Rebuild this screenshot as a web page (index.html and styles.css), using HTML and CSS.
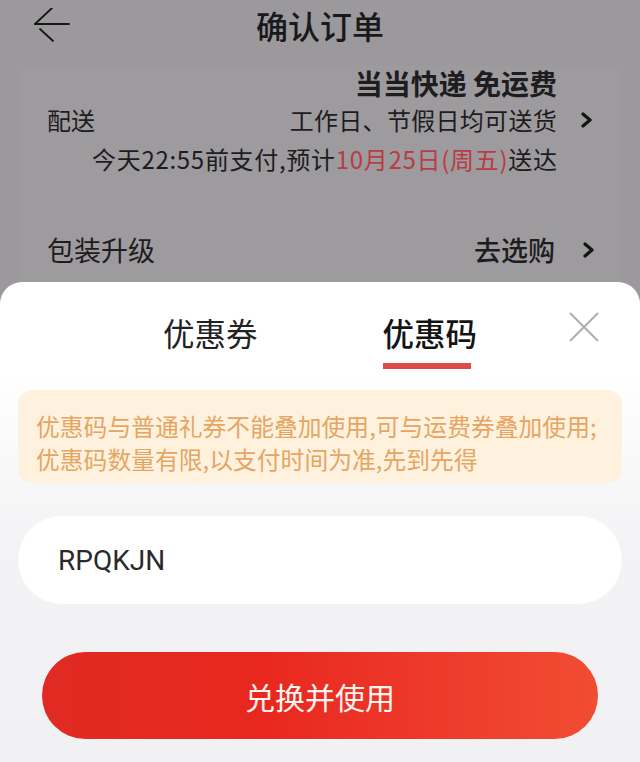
FILE: index.html
```html
<!DOCTYPE html>
<html lang="zh-CN">
<head>
<meta charset="utf-8">
<title>确认订单</title>
<link rel="stylesheet" href="styles.css">
</head>
<body>
<div class="page">
  <header class="topbar">
    <div class="back">
      <svg width="40" height="40" viewBox="0 0 40 40" class="back-icon">
        <line x1="1" y1="16" x2="35" y2="16" />
        <line x1="1" y1="16" x2="18" y2="0" />
        <line x1="6" y1="21" x2="19" y2="33" />
      </svg>
    </div>
    <h1 class="title">确认订单</h1>
    <div></div>
  </header>

  <section class="card">
    <div class="delivery">
      <div class="d-label">配送</div>
      <div class="d-line1">当当快递 免运费</div>
      <div class="d-line2">工作日、节假日均可送货</div>
      <div class="d-chev">
        <svg width="12" height="16" viewBox="0 0 12 16" class="chev"><polyline points="2,2 9,8 2,14" /></svg>
      </div>
      <div class="d-line3">今天22:55前支付,预计<span class="red">10月25日(周五)</span>送达</div>
    </div>
    <div class="pack">
      <div class="pack-label">包装升级</div>
      <div class="pack-right">
        <span class="pack-go">去选购</span>
        <svg width="12" height="16" viewBox="0 0 12 16" class="chev"><polyline points="2,2 9,8 2,14" /></svg>
      </div>
    </div>
  </section>

  <section class="sheet">
    <div class="tabs-row">
      <div></div>
      <div class="tabs">
        <div class="tab">优惠券</div>
        <div class="tab active">
          <span>优惠码</span>
          <i class="underline"></i>
        </div>
      </div>
      <div class="close">
        <svg width="30" height="30" viewBox="0 0 30 30" class="close-icon">
          <line x1="1" y1="1" x2="29" y2="29" />
          <line x1="29" y1="1" x2="1" y2="29" />
        </svg>
      </div>
    </div>

    <div class="notice">
      <p>优惠码与普通礼券不能叠加使用,可与运费券叠加使用;</p>
      <p>优惠码数量有限,以支付时间为准,先到先得</p>
    </div>

    <div class="code-input">RPQKJN</div>

    <button class="submit">兑换并使用</button>
  </section>
</div>
</body>
</html>
```

FILE: styles.css
```css
* { box-sizing: border-box; }

html, body {
  margin: 0;
  padding: 0;
}

body {
  width: 640px;
  height: 762px;
  overflow: hidden;
  background: #9b999c;
  font-family: "Noto Sans CJK SC", "Noto Sans", sans-serif;
  color: #1d1c1e;
}

.page {
  display: flex;
  flex-direction: column;
  height: 762px;
}

.topbar {
  height: 50px;
  display: grid;
  grid-template-columns: 1fr auto 1fr;
  align-items: center;
}

.back {
  padding-left: 34px;
  padding-top: 8px;
  height: 50px;
}

.back-icon line {
  stroke: #161616;
  stroke-width: 1.8;
  stroke-linecap: round;
}

.title {
  margin: 0;
  font-size: 32px;
  font-weight: 500;
  line-height: 50px;
  color: #19181a;
}

.card {
  margin: 16px 18px 0;
  padding: 0 0 10px 29px;
  background: #9d9b9e;
  border-radius: 12px 12px 0 0;
}

.delivery {
  display: grid;
  grid-template-columns: auto 1fr 65px;
  grid-template-rows: 34px 40px 38px;
  align-items: center;
}

.d-line1 {
  grid-column: 2;
  grid-row: 1;
  text-align: right;
  font-size: 28px;
  font-weight: 700;
  line-height: 34px;
}

.d-label {
  grid-column: 1;
  grid-row: 2;
  font-size: 24px;
  line-height: 40px;
}

.d-line2 {
  grid-column: 2;
  grid-row: 2;
  text-align: right;
  font-size: 24px;
  line-height: 40px;
  letter-spacing: 0.3px;
}

.d-chev {
  grid-column: 3;
  grid-row: 2;
  padding-left: 24px;
  display: flex;
  align-items: center;
}

.d-line3 {
  grid-column: 1 / 3;
  grid-row: 3;
  text-align: right;
  font-size: 24px;
  line-height: 38px;
  letter-spacing: 0.7px;
  margin-right: -0.7px;
}

.red { color: #b93b45; }

.chev polyline {
  fill: none;
  stroke: #141414;
  stroke-width: 3.2;
  stroke-linecap: round;
  stroke-linejoin: round;
}

.pack {
  margin-top: 50px;
  height: 44px;
  display: flex;
  align-items: center;
  justify-content: space-between;
  padding-right: 27px;
}

.pack-label {
  font-size: 27px;
  line-height: 44px;
}

.pack-right {
  display: flex;
  align-items: center;
  gap: 28px;
}

.pack-go {
  font-size: 27px;
  font-weight: 500;
  line-height: 44px;
}

.sheet {
  flex: 1;
  border-radius: 22px 22px 0 0;
  background: linear-gradient(to bottom, #ffffff 0, #ffffff 90px, #f3f3f5 260px, #f1f1f3 480px);
  display: flex;
  flex-direction: column;
}

.tabs-row {
  display: grid;
  grid-template-columns: 1fr auto 1fr;
  padding-top: 28px;
}

.tabs {
  display: flex;
  gap: 125px;
}

.tab {
  font-size: 31.5px;
  line-height: 44px;
  color: #222;
  display: flex;
  flex-direction: column;
}

.tab.active {
  font-weight: 500;
  color: #141414;
}

.underline {
  display: block;
  width: 88px;
  height: 6px;
  margin-top: 9px;
  background: #e04a44;
}

.close {
  justify-self: end;
  margin-right: 41px;
  padding-top: 2px;
}

.close-icon line {
  stroke: #ababab;
  stroke-width: 1.8;
}

.notice {
  margin: 21px 18px 0;
  height: 93px;
  padding: 19px 0 0 18px;
  background: #fef2df;
  border-radius: 14px;
  color: #e6a562;
  font-size: 23.8px;
  line-height: 33px;
}

.notice p {
  margin: 0;
  white-space: nowrap;
}

.code-input {
  margin: 33px 18px 0;
  height: 88px;
  border-radius: 44px;
  background: #ffffff;
  padding-left: 40px;
  display: flex;
  align-items: center;
  font-family: Roboto, "Noto Sans", sans-serif;
  font-size: 28px;
  color: #2a2a2a;
}

.submit {
  margin: 48px 42px 0;
  height: 87px;
  border: none;
  border-radius: 44px;
  background: linear-gradient(to right, #e02a22 0%, #e8281f 40%, #ee3d2c 75%, #f24c33 100%);
  color: #fff4ef;
  font-family: "Noto Sans CJK SC", sans-serif;
  font-size: 30px;
  font-weight: 400;
  padding: 0;
}
```
